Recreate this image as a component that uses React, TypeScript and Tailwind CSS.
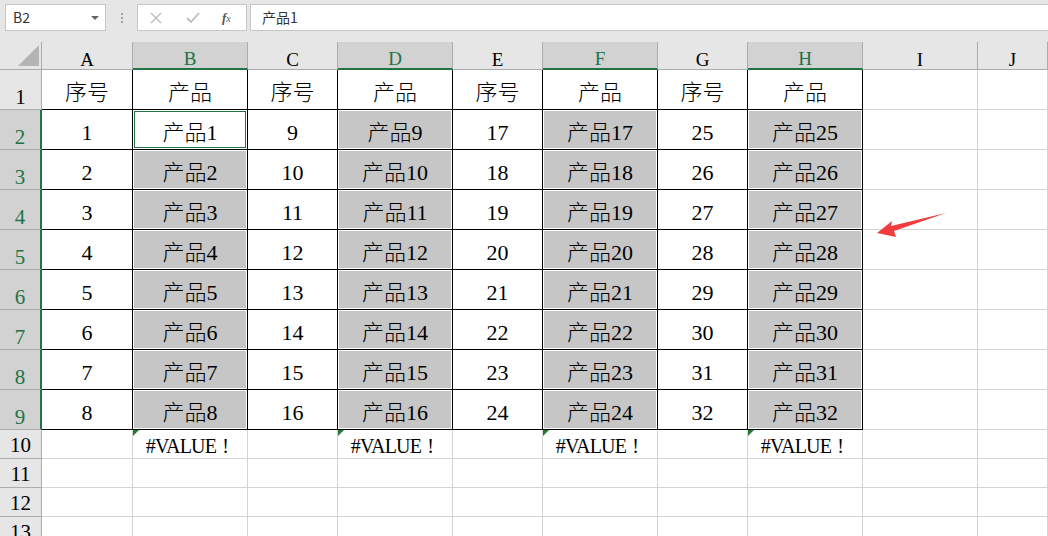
import React from 'react';

const cols = ['A', 'B', 'C', 'D', 'E', 'F', 'G', 'H', 'I', 'J'];
const hiCols = ['B', 'D', 'F', 'H'];
const serif = { fontFamily: '"Liberation Serif", "Noto Sans CJK SC", serif' };

// rows 1..9 as table data
const tableRow = (r: number): string[] => {
  if (r === 1) return ['序号', '产品', '序号', '产品', '序号', '产品', '序号', '产品'];
  const i = r - 1;
  return [
    String(i), `产品${i}`,
    String(i + 8), `产品${i + 8}`,
    String(i + 16), `产品${i + 16}`,
    String(i + 24), `产品${i + 24}`,
  ];
};

const widthClass = (c: number) =>
  c === 0 ? 'w-[91px]' : c === 9 ? 'flex-1' : c === 8 || c % 2 === 1 ? 'w-[115px]' : 'w-[90px]';

const Cell: React.FC<{ r: number; c: number }> = ({ r, c }) => {
  const inTable = r <= 9 && c <= 7;
  const border = inTable ? 'border-black' : 'border-[#d4d4d4]';
  const isActive = r === 2 && c === 1;
  const isGray = inTable && r >= 2 && c % 2 === 1 && !isActive;
  const text = inTable ? tableRow(r)[c] : '';
  const isErr = r === 10 && c % 2 === 1 && c <= 7;

  return (
    <div className={`relative shrink-0 box-border border-r border-b ${border} ${widthClass(c)} h-full p-px`}>
      <div
        className={`w-full h-full flex items-center justify-center ${isGray ? 'bg-[#c6c6c6]' : ''} ${isActive ? 'border border-[#217346]' : ''}`}
      >
        {text && <span className="text-[22px] font-light text-black leading-none pt-[6px]">{text}</span>}
        {isErr && (
          <span className="text-[20px] font-light tracking-[-0.8px] text-black leading-none pt-[3px]">
            #VALUE<span className="inline-block w-[18px] text-center">!</span>
          </span>
        )}
      </div>
      {isErr && (
        <div className="absolute left-0 top-0 w-0 h-0 border-t-[6px] border-t-[#1e7b34] border-r-[6px] border-r-transparent" />
      )}
    </div>
  );
};

const rowHeights = [40, 40, 40, 40, 40, 40, 40, 40, 40, 29, 29, 29, 29];
const hClass = (h: number) => (h === 40 ? 'h-[40px]' : 'h-[29px]');

export default function App() {
  return (
    <div className="relative w-[1048px] h-[536px] overflow-hidden bg-white" style={serif}>
      {/* formula bar */}
      <div className="h-[42px] bg-[#e6e6e6] flex items-start pt-[4px] pl-[5px]" style={{ fontFamily: '"Noto Sans CJK SC", "Liberation Sans", sans-serif' }}>
        <div className="w-[101px] h-[27px] bg-white border border-[#c6c6c6] flex items-center justify-between pl-[7px] pr-[6px] box-border">
          <span className="text-[14px] text-[#333]">B2</span>
          <div className="w-0 h-0 border-l-[4px] border-l-transparent border-r-[4px] border-r-transparent border-t-[4px] border-t-[#666]" />
        </div>
        <div className="w-[31px] h-[27px] flex flex-col items-center justify-center gap-[2px]">
          <div className="w-[2px] h-[2px] bg-[#a0a0a0]" />
          <div className="w-[2px] h-[2px] bg-[#a0a0a0]" />
          <div className="w-[2px] h-[2px] bg-[#a0a0a0]" />
        </div>
        <div className="w-[110px] h-[27px] bg-white border border-[#c6c6c6] box-border flex items-center">
          <svg width="12" height="12" viewBox="0 0 12 12" className="ml-[12px]">
            <path d="M1 1 L11 11 M11 1 L1 11" stroke="#bdbdbd" strokeWidth="1.4" />
          </svg>
          <svg width="14" height="12" viewBox="0 0 14 12" className="ml-[24px]">
            <path d="M1 6 L5 10 L13 1" stroke="#bdbdbd" strokeWidth="1.8" fill="none" />
          </svg>
          <span className="ml-[22px] text-[13px] text-[#555] italic leading-none" style={serif}>
            <span className="font-bold">f</span><span className="text-[10px]">x</span>
          </span>
        </div>
        <div className="ml-[3px] flex-1 h-[27px] bg-white border border-r-0 border-[#c6c6c6] box-border flex items-center pl-[11px]">
          <span className="text-[14px] text-[#333]">产品1</span>
        </div>
      </div>

      {/* column headers */}
      <div className="flex h-[28px] bg-[#e6e6e6]">
        <div className="relative w-[42px] shrink-0 border-r border-b border-[#ababab] box-border">
          <svg width="42" height="28" className="absolute left-0 top-0">
            <polygon points="18,24 39,24 39,3" fill="#b4b4b4" />
          </svg>
        </div>
        {cols.map((c, i) => {
          const hi = hiCols.includes(c);
          return (
            <div
              key={c}
              className={`shrink-0 box-border border-r border-[#ababab] ${widthClass(i)} flex items-center justify-center ${hi ? 'bg-[#d2d2d2] border-b-2 border-b-[#217346] text-[#217346]' : 'border-b border-b-[#ababab] text-black'}`}
            >
              <span className="text-[19px] leading-none pt-[7px]">{c}</span>
            </div>
          );
        })}
      </div>

      {/* rows */}
      {rowHeights.map((h, ri) => {
        const r = ri + 1;
        const hi = r >= 2 && r <= 9;
        return (
          <div key={r} className={`flex ${hClass(h)}`}>
            <div
              className={`w-[42px] shrink-0 box-border border-b border-[#ababab] flex justify-center ${h === 40 ? 'items-end pb-[1px]' : 'items-center pt-[2px]'} ${hi ? 'bg-[#d2d2d2] border-r-2 border-r-[#217346] text-[#217346]' : 'bg-[#e6e6e6] border-r border-r-[#ababab] text-black'}`}
            >
              <span className="text-[21px] leading-none">{r}</span>
            </div>
            {cols.map((_, c) => (
              <Cell key={c} r={r} c={c} />
            ))}
          </div>
        );
      })}

      {/* red arrow */}
      <svg className="absolute left-0 top-0 pointer-events-none" width="1048" height="536">
        <polygon points="877,233 892,221 891,226 946,213 894,231 896,237" fill="#f03c3c" />
      </svg>
    </div>
  );
}
